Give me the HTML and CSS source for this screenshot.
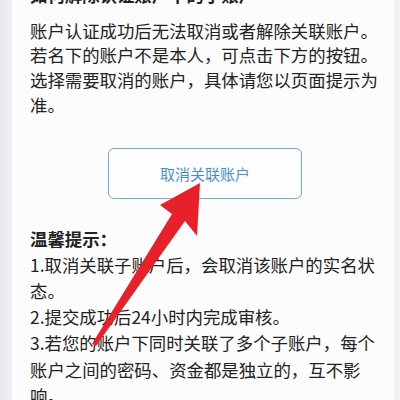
FILE: index.html
```html
<!DOCTYPE html>
<html lang="zh-CN">
<head>
  <meta charset="UTF-8" />
  <title>取消关联账户</title>
  <link rel="stylesheet" href="styles.css">
</head>
<body>

<div class="page">
  <div class="side"></div>

  <main class="content">
    <h2 class="title">如何解除认证账户下的子账户</h2>

    <p class="intro">账户认证成功后无法取消或者解除关联账户。若名下的账户不是本人，可点击下方的按钮。选择需要取消的账户，具体请您以页面提示为准。</p>

    <div class="action">
      <button class="unlink-btn">取消关联账户</button>
    </div>

    <h3 class="tips-title">温馨提示：</h3>
    <p class="tips">1.取消关联子账户后，会取消该账户的实名状态。</p>
    <p class="tips">2.提交成功后24小时内完成审核。</p>
    <p class="tips">3.若您的账户下同时关联了多个子账户，每个账户之间的密码、资金都是独立的，互不影响。</p>
  </main>

  <div class="edge"></div>
</div>

<!-- red pointer drawn over the screenshot -->
<svg class="pointer" width="400" height="400" viewBox="0 0 400 400">
  <polygon fill="#e8202a" points="200,183 160,205 172,214 92,344 96,346 185,221 197,236" />
</svg>

</body>
</html>
```

FILE: styles.css
```css
body {
  margin: 0;
  padding: 0;
  background: #fcfcfc;
  font-family: "Noto Sans CJK SC", "Noto Sans", sans-serif;
  color: #222;
  overflow: hidden;
}

.page {
  display: flex;
  height: 400px;
  overflow: hidden;
}

.side {
  width: 12px;
  flex-shrink: 0;
  background: linear-gradient(to right, #e4e8ee, #eef1f5);
}

.edge {
  width: 6px;
  flex-shrink: 0;
  background: #f2f2f2;
}

.content {
  flex: 1;
  padding-left: 18px;
}

.content p,
.content h2,
.content h3 {
  width: 355px;
  font-size: 17.4px;
}

.title {
  margin: -18px 0 0;
  line-height: 25px;
  font-weight: bold;
}

.intro {
  margin: 11.6px 0 0;
  line-height: 24.8px;
}

.action {
  margin-top: 30px;
  padding-left: 78px;
}

.unlink-btn {
  width: 194px;
  height: 51px;
  background: #fdfdfd;
  border: 1px solid #72a9dc;
  border-radius: 6px;
  color: #4b8fd0;
  font-family: inherit;
  font-size: 15px;
  padding: 0;
}

.tips-title {
  margin: 27px 0 0;
  line-height: 26px;
  font-weight: bold;
}

.tips {
  margin: 0;
  line-height: 26.2px;
}

.tips:first-of-type {
  margin-top: 1px;
}

.pointer {
  position: absolute;
  left: 0;
  top: 0;
}
```
